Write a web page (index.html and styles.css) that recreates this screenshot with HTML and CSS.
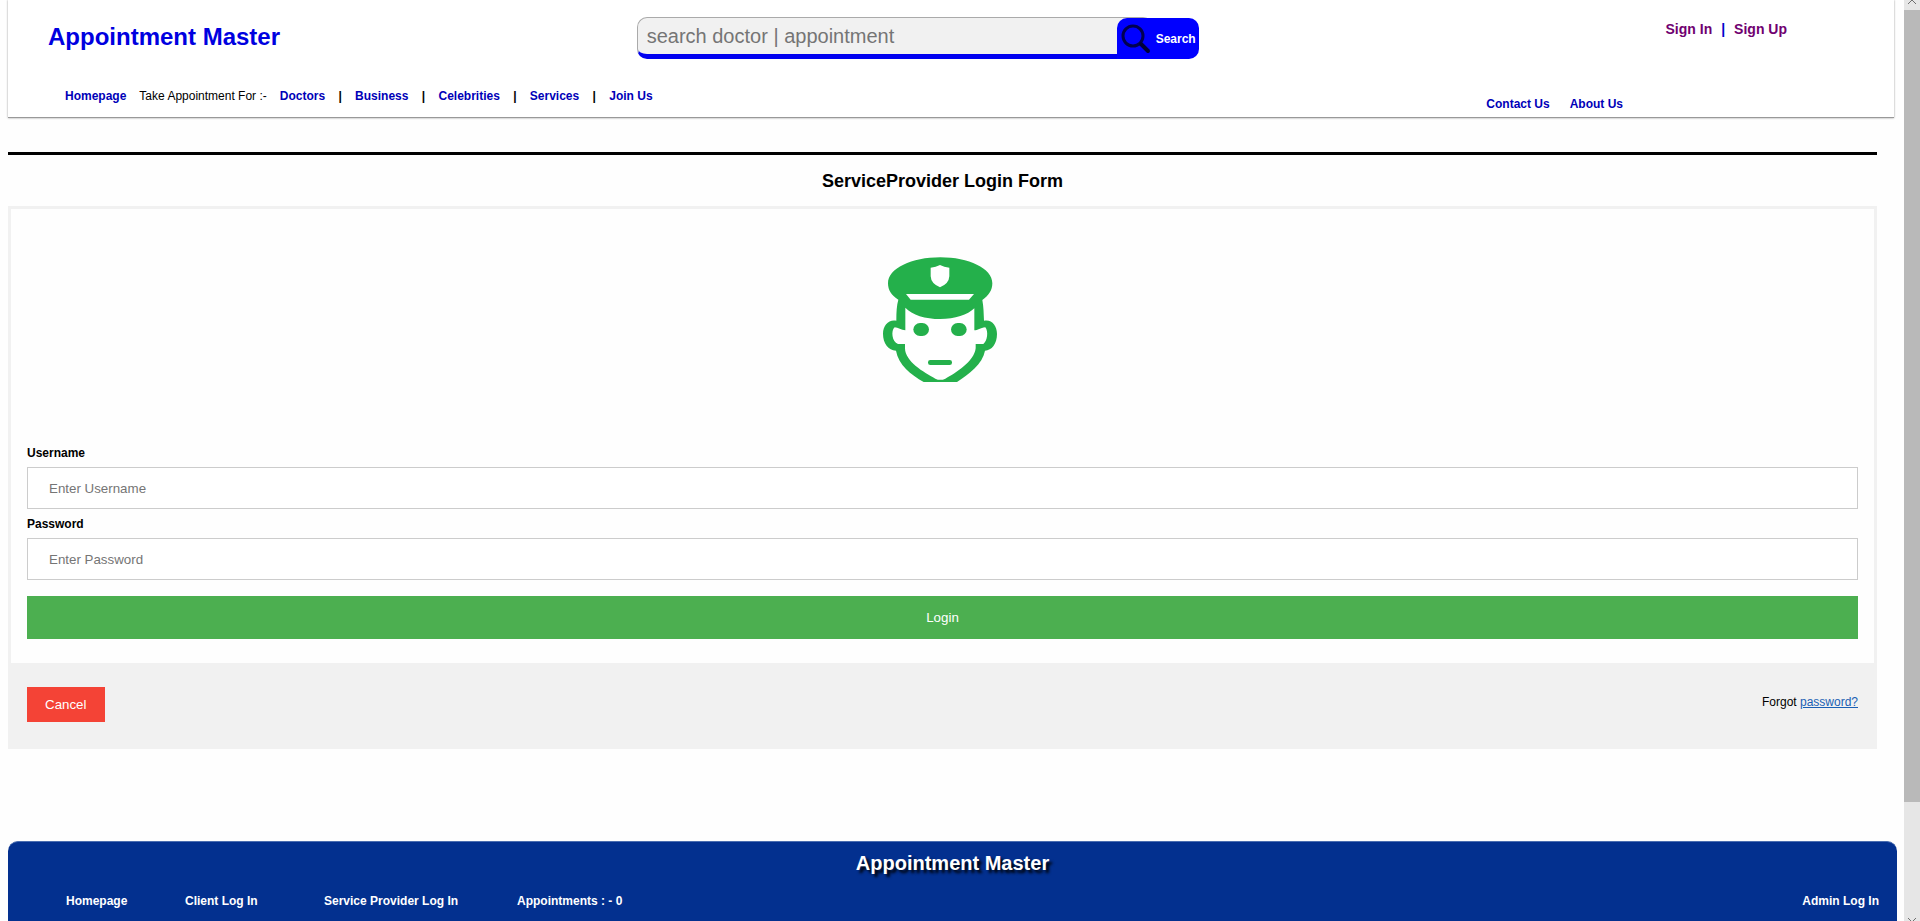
FILE: index.html
```html
<!DOCTYPE html>
<html lang="en">
<head>
<meta charset="utf-8">
<title>Appointment Master</title>
<link rel="stylesheet" href="styles.css">
</head>
<body>
<div class="page">
  <header class="header">
    <div class="header-top">
      <a class="logo" href="#">Appointment Master</a>
      <form class="search">
        <input class="search-input" type="text" aria-label="Search" placeholder="search doctor | appointment">
        <button class="search-button" type="submit">
          <svg class="search-icon" viewBox="0 0 30 30" aria-hidden="true">
            <circle cx="12" cy="12" r="10" fill="none" stroke="#000050" stroke-width="3"/>
            <path d="M20 20L27 27" stroke="#000038" stroke-width="4" stroke-linecap="round"/>
          </svg>
          <span>Search</span>
        </button>
      </form>
      <div class="account">
        <a href="#">Sign In</a><span>|</span><a href="#">Sign Up</a>
      </div>
    </div>
    <div class="header-bottom">
      <nav class="main-nav">
        <a href="#">Homepage</a>
        <span class="nav-label">Take Appointment For :-</span>
        <a href="#">Doctors</a><span class="separator">|</span>
        <a href="#">Business</a><span class="separator">|</span>
        <a href="#">Celebrities</a><span class="separator">|</span>
        <a href="#">Services</a><span class="separator">|</span>
        <a href="#">Join Us</a>
      </nav>
      <nav class="side-nav">
        <a href="#">Contact Us</a>
        <a href="#">About Us</a>
      </nav>
    </div>
  </header>

  <main class="main">
    <h1 class="title">ServiceProvider Login Form</h1>
    <form class="login">
      <div class="avatar-row">
        <svg class="avatar" viewBox="68 50 342 375" aria-hidden="true">
          <path fill="#24b04b" d="M240 51C325 51 396 84 396 129C396 150 385 166 366 179C370 200 370 220 371 241C394 236 410 255 410 281C410 311 394 330 374 331C367 371 325 402 290 425H190C152 403 114 373 107 331C84 330 68 309 68 280C68 254 86 236 108 241C108 215 109 195 114 178C94 166 83 150 83 129C83 84 154 51 240 51Z"/>
          <path fill="#fff" d="M135 202C155 224 195 236 240 236C284 236 322 224 342 204V270C352 270 360 263 375 261C385 273 381 303 369 311H346V324C342 363 285 399 255 415Q240 422 225 415C190 396 134 363 134 324V311H113C95 305 91 271 103 261C113 262 123 270 135 270Z"/>
          <path fill="#fff" d="M137 161H341L326 178H151Z"/>
          <path fill="#fff" d="M211 82Q227 81 239 74Q251 81 267 82V108Q266 130 239 141Q212 130 211 108Z"/>
          <rect fill="#24b04b" x="159" y="248" width="47" height="39" rx="20"/>
          <rect fill="#24b04b" x="272" y="248" width="47" height="39" rx="20"/>
          <rect fill="#24b04b" x="203" y="359" width="72" height="15" rx="7"/>
        </svg>
      </div>
      <div class="fields">
        <label for="username">Username</label>
        <input id="username" type="text" placeholder="Enter Username">
        <label for="password">Password</label>
        <input id="password" type="password" placeholder="Enter Password">
        <button class="login-button" type="submit">Login</button>
      </div>
      <div class="login-foot">
        <button class="cancel-button" type="button">Cancel</button>
        <span class="forgot">Forgot <a href="#">password?</a></span>
      </div>
    </form>
  </main>

  <footer class="footer">
    <div class="footer-title">Appointment Master</div>
    <nav class="footer-nav">
      <a href="#">Homepage</a>
      <a href="#">Client Log In</a>
      <a href="#">Service Provider Log In</a>
      <a href="#">Appointments : - 0</a>
      <a class="admin" href="#">Admin Log In</a>
    </nav>
  </footer>
</div>
<div class="scrollbar" aria-hidden="true">
  <svg class="arrow arrow-up" viewBox="0 0 16 10"><path d="M4 4L8 0L12 4" fill="none" stroke="#707070"/></svg>
  <div class="thumb"></div>
  <div class="track"></div>
  <svg class="arrow" viewBox="0 0 16 10"><path d="M4 7L8 11L12 7" fill="none" stroke="#707070"/></svg>
</div>
</body>
</html>
```
FILE: styles.css
```css
* {
  box-sizing: border-box;
}

body {
  margin: 0;
  display: flex;
  height: 100vh;
  overflow: hidden;
  background: #fefefe;
  color: #000;
  font-family: Arial, "Liberation Sans", sans-serif;
  font-size: 12px;
  line-height: 14px;
}

input,
button {
  font-family: inherit;
}

a {
  text-decoration: none;
}

.page {
  flex: 1;
  display: flex;
  flex-direction: column;
  padding-left: 8px;
}

/* Header */
.header {
  flex: none;
  height: 118px;
  margin-right: 10px;
  background: #fff;
  box-shadow: 0 0 2px #999;
  border-bottom: 1px solid #999;
}

.header-top {
  display: grid;
  grid-template-columns: repeat(3, 1fr);
  align-items: start;
}

.logo {
  padding: 23px 0 0 40px;
  color: #0000e0;
  font-size: 24px;
  line-height: 28px;
  font-weight: bold;
}

.search {
  display: flex;
  width: 562px;
  height: 42px;
  margin-top: 17px;
}

.search-input {
  flex: 1;
  min-width: 0;
  margin-right: -36px;
  padding: 0 36px 0 9px;
  border: 1px solid #aaa;
  border-bottom: 5px solid #0000f0;
  border-right: 0;
  border-radius: 10px;
  background: #f1f1f1;
  font-size: 20px;
}

::placeholder {
  color: #757575;
}

.search-button {
  position: relative;
  display: flex;
  align-items: center;
  gap: 5px;
  width: 82px;
  margin-top: 1px;
  padding: 0 2px 0 4px;
  border: 0;
  border-radius: 10px 10px 10px 0;
  background: #00f;
  color: #fff;
  font-size: 12px;
  font-weight: bold;
}

.search-icon {
  flex: none;
  width: 30px;
  height: 30px;
}

.account {
  display: flex;
  justify-content: flex-end;
  gap: 9px;
  padding: 21px 107px 0 0;
  color: #00c;
  font-size: 14px;
  line-height: 16px;
  font-weight: bold;
}

.account a {
  color: #700070;
}

.header-bottom {
  display: flex;
  justify-content: space-between;
  padding: 30px 271px 0 57px;
  font-weight: bold;
}

.header-bottom a {
  color: #0000b8;
}

.main-nav {
  display: flex;
  gap: 13px;
}

.nav-label {
  font-weight: normal;
}

.separator {
  width: 4px;
  text-align: center;
}

.side-nav {
  display: flex;
  gap: 20px;
  padding-top: 8px;
}

/* Login form */
.main {
  margin: 34px 27px 0 0;
  border-top: 3px solid #000;
}

.title {
  margin: 16px 0 15px;
  font-size: 18px;
  line-height: 20px;
  text-align: center;
}

.login {
  border: 3px solid #f1f1f1;
}

.avatar-row {
  display: flex;
  justify-content: center;
  padding: 48px 5px 64px 0;
}

.avatar {
  width: 114px;
  height: 125px;
}

.fields {
  display: flex;
  flex-direction: column;
  padding: 0 16px 24px;
}

.fields label {
  font-weight: bold;
}

.fields input {
  height: 42px;
  margin: 7px 0 8px;
  padding: 12px 21px;
  border: 1px solid #ccc;
  background: #fff;
}

.login-button {
  height: 43px;
  margin-top: 8px;
  border: 0;
  background: #4caf50;
  color: #fff;
}

.login-foot {
  display: flex;
  justify-content: space-between;
  align-items: flex-start;
  padding: 24px 16px;
  background: #f1f1f1;
}

.cancel-button {
  height: 35px;
  padding: 0 18px;
  border: 0;
  background: #f44336;
  color: #fff;
}

.forgot {
  padding-top: 8px;
}

.forgot a {
  color: #1a5fb4;
  text-decoration: underline;
}

/* Footer */
.footer {
  flex: 1;
  margin: 92px 7px 0 0;
  padding: 10px 18px 0 58px;
  border-top: 1px solid #4a6db0;
  border-radius: 10px 10px 0 0;
  background: #03308f;
  color: #fff;
  font-weight: bold;
}

.footer-title {
  margin-right: 40px;
  font-size: 20px;
  line-height: 22px;
  text-align: center;
  text-shadow: 3px 3px 3px #000;
}

.footer-nav {
  display: grid;
  grid-template-columns: 119px 139px 193px auto 1fr;
  margin-top: 20px;
}

.footer-nav a {
  color: #fff;
}

.admin {
  text-align: right;
}

/* Scroll track at the window edge */
.scrollbar {
  display: flex;
  flex-direction: column;
  flex: none;
  width: 16px;
  background: #e6e6e6;
}

.arrow {
  flex: none;
  width: 16px;
  height: 10px;
}

.thumb {
  flex: 792;
  background: #b9b9b9;
}

.track {
  flex: 109;
}
```
